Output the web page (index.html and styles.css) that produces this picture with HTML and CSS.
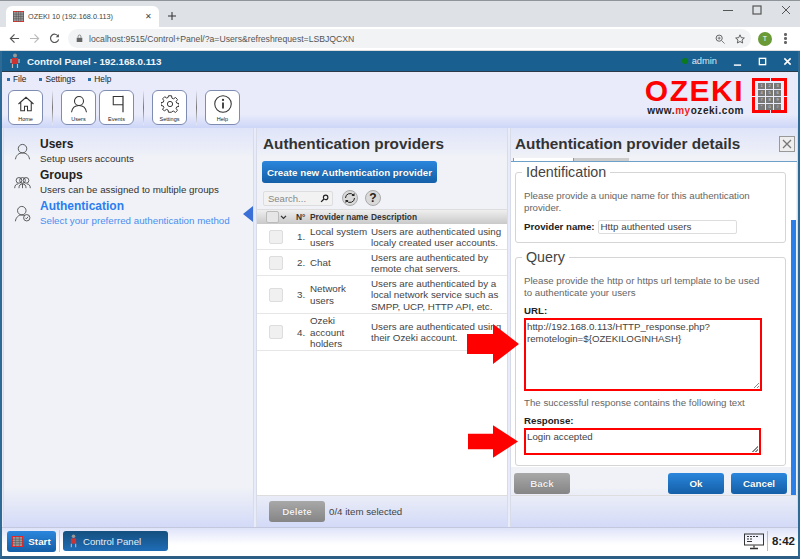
FILE: index.html
```html
<!DOCTYPE html>
<html lang="en">
<head>
<meta charset="utf-8">
<title>OZEKI 10</title>
<link rel="stylesheet" href="styles.css">
</head>
<body>
<div class="browser">
  <div class="tabbar">
    <div class="tab">
      <svg class="fav" viewBox="0 0 12 12"><rect x=".5" y=".5" width="11" height="11" fill="#999" stroke="#e22"/><path d="M0 3.500h12M0 6h12M0 8.500h12M3.500 0v12M6 0v12M8.500 0v12" stroke="#555" stroke-width=".6"/></svg>
      <span class="tabtitle">OZEKI 10 (192.168.0.113)</span>
      <span class="tabx">✕</span>
    </div>
    <svg class="newtab" viewBox="0 0 10 10"><path d="M5 0v10M0 5h10" stroke="#333" stroke-width="1.300"/></svg>
    <div class="winctl">
      <svg viewBox="0 0 10 10"><path d="M0 5.500h10" stroke="#555"/></svg>
      <svg viewBox="0 0 10 10"><rect x="1" y="1" width="8" height="8" fill="none" stroke="#555" stroke-width="1.200"/></svg>
      <svg viewBox="0 0 10 10"><path d="M1 1l8 8M9 1l-8 8" stroke="#555"/></svg>
    </div>
  </div>
  <div class="addr">
    <svg class="nav" viewBox="0 0 12 12"><path d="M11 6H2M6 1.500L1.500 6 6 10.500" fill="none" stroke="#555" stroke-width="1.300"/></svg>
    <svg class="nav" viewBox="0 0 12 12"><path d="M1 6h9M6 1.500L10.500 6 6 10.500" fill="none" stroke="#bbb" stroke-width="1.300"/></svg>
    <svg class="nav" viewBox="0 0 12 12"><path d="M10 3.500A4.500 4.500 0 1 0 10.500 7" fill="none" stroke="#555" stroke-width="1.300"/><path d="M10.800 1v3.500H7.300z" fill="#555"/></svg>
    <div class="omni">
      <svg class="lock" viewBox="0 0 10 12"><rect x="1" y="5" width="8" height="6" fill="#666"/><path d="M3 5V3a2 2 0 0 1 4 0v2" fill="none" stroke="#666"/></svg>
      <span class="url">localhost:9515/Control+Panel/?a=Users&amp;refreshrequest=LSBJQCXN</span>
      <svg class="omniicon" viewBox="0 0 12 12"><circle cx="5" cy="5" r="3.700" fill="none" stroke="#666" stroke-width="1.200"/><path d="M8 8l3.500 3.500M3.200 5h3.600M5 3.200v3.600" stroke="#666"/></svg>
      <svg class="omniicon" viewBox="0 0 12 12"><path d="M6 1l1.500 3.400 3.700.4-2.800 2.400.8 3.600L6 9l-3.200 1.800.8-3.600L.8 4.800l3.700-.4z" fill="none" stroke="#555" stroke-width="1.100"/></svg>
    </div>
    <div class="avatar">T</div>
    <div class="kebab"><i></i><i></i><i></i></div>
  </div>
</div>

<div class="app">
  <div class="titlebar">
    <svg class="applogo" viewBox="0 0 10 16"><circle cx="5" cy="2.500" r="2" fill="#999"/><rect x="2" y="5" width="6" height="6" fill="#c33"/><path d="M2.500 11v4M7.500 11v4M1 6v4M9 6v4" stroke="#bbb" stroke-width="1.200"/></svg>
    <span class="apptitle">Control Panel - 192.168.0.113</span>
    <span class="dot"></span><span class="admin">admin</span>
    <div class="appctl">
      <svg viewBox="0 0 10 10"><path d="M1 9h8" stroke="#fff" stroke-width="1.600"/></svg>
      <svg viewBox="0 0 10 10"><rect x="1.500" y="1.500" width="7" height="7" fill="none" stroke="#fff" stroke-width="1.500"/></svg>
      <svg viewBox="0 0 10 10"><path d="M1.500 1.500l7 7M8.500 1.500l-7 7" stroke="#fff" stroke-width="1.700"/></svg>
    </div>
  </div>
  <div class="top">
    <div class="topleft">
      <div class="menu">
        <span class="mi">File</span><span class="mi">Settings</span><span class="mi">Help</span>
      </div>
      <div class="tools">
        <div class="tool"><svg viewBox="0 0 24 24"><path d="M2 12L12 3l10 9M5 10v11h5v-6h4v6h5V10" fill="none" stroke="#333" stroke-width="1.400"/></svg><span>Home</span></div>
        <div class="sep"></div>
        <div class="tool"><svg viewBox="0 0 24 24"><circle cx="12" cy="8" r="6" fill="none" stroke="#333" stroke-width="1.400"/><path d="M2 23c1-6 5-9 10-9s9 3 10 9" fill="none" stroke="#333" stroke-width="1.400"/></svg><span>Users</span></div>
        <div class="tool"><svg viewBox="0 0 24 24"><path d="M20 1v22" stroke="#333" stroke-width="1.600"/><path d="M20 2H7v11h13" fill="none" stroke="#333" stroke-width="1.400"/></svg><span>Events</span></div>
        <div class="sep"></div>
        <div class="tool"><svg viewBox="0 0 24 24"><circle cx="12" cy="12" r="3.500" fill="none" stroke="#333" stroke-width="1.300"/><path d="M10 1h4l.6 3.200 2 .9 2.800-1.800 2.600 2.800-1.900 2.700.9 2 3 .6v3.800l-3 .6-.9 2 1.800 2.700-2.700 2.700-2.700-1.800-2 .8L14 23h-4l-.6-3-2-.8-2.700 1.800L2 19.300l1.800-2.700-.9-2-2.900-.6v-3.800l3-.6.800-2L2.200 5.100l2.700-2.800 2.700 1.800 1.900-.9z" fill="none" stroke="#333" stroke-width="1.300"/></svg><span>Settings</span></div>
        <div class="sep"></div>
        <div class="tool"><svg viewBox="0 0 24 24"><circle cx="12" cy="12" r="11" fill="none" stroke="#333" stroke-width="1.400"/><path d="M12 10v8" stroke="#333" stroke-width="2.400"/><circle cx="12" cy="6.500" r="1.500" fill="#333"/></svg><span>Help</span></div>
      </div>
    </div>
    <div class="brand">
      <div class="brandtext">
        <div class="ozeki">OZEKI</div>
        <div class="www">www.<b>my</b>ozeki.com</div>
      </div>
      <div class="keypad">
        <span>1</span><span>2</span><span>3</span><span>4</span><span>5</span><span>6</span><span>7</span><span>8</span><span>9</span><span>*</span><span>0</span><span>#</span>
      </div>
    </div>
  </div>

  <div class="main">
    <div class="panel left">
      <div class="navitem">
        <svg viewBox="0 0 24 24"><circle cx="12" cy="8" r="6" fill="none" stroke="#444" stroke-width="1.200"/><path d="M2 23c1-6 5-9 10-9s9 3 10 9" fill="none" stroke="#444" stroke-width="1.200"/></svg>
        <div><h3>Users</h3><p>Setup users accounts</p></div>
      </div>
      <div class="navitem">
        <svg viewBox="0 0 24 24"><g fill="none" stroke="#444" stroke-width="1.200"><circle cx="7" cy="9" r="4"/><circle cx="12" cy="9" r="4"/><circle cx="17" cy="9" r="4"/><path d="M1 20c0-4 2-6 5-6M7 20c0-4 2-6 5-6s5 2 5 6M18 14c3 0 5 2 5 6M12 14v6"/></g></svg>
        <div><h3>Groups</h3><p>Users can be assigned to multiple groups</p></div>
      </div>
      <div class="navitem active">
        <svg viewBox="0 0 24 24"><g fill="none" stroke="#444" stroke-width="1.200"><circle cx="11" cy="8" r="6"/><path d="M2 23c.5-5 4-9 9-9 1.500 0 3 .4 4 1"/><circle cx="18" cy="18" r="4.500"/><path d="M16 18l1.500 1.500 2.500-3"/></g></svg>
        <div><h3>Authentication</h3><p>Select your preferred authentication method</p></div>
        <span class="pointer"></span>
      </div>
    </div>

    <div class="panel mid">
      <h2>Authentication providers</h2>
      <button class="btn blue create">Create new Authentication provider</button>
      <div class="searchrow">
        <div class="search"><span>Search...</span><svg viewBox="0 0 12 12"><circle cx="7.500" cy="4.500" r="3" fill="none" stroke="#222" stroke-width="1.500"/><path d="M5.300 6.700L1.500 10.500" stroke="#222" stroke-width="1.800"/></svg></div>
        <div class="round"><svg viewBox="0 0 12 12"><path d="M1.500 6a4.500 4.500 0 0 1 8-2.800M10.500 6a4.500 4.500 0 0 1-8 2.800" fill="none" stroke="#222"/><path d="M10.500 1v3h-3zM1.500 11V8h3z" fill="#222"/></svg></div>
        <div class="round q">?</div>
      </div>
      <div class="thead">
        <span class="thcheck"></span>
        <svg class="chev" viewBox="0 0 8 6"><path d="M1 1l3 3 3-3" fill="none" stroke="#333" stroke-width="1.500"/></svg>
        <span class="thn">N°</span><span class="thname">Provider name</span><span>Description</span>
      </div>
      <div class="row"><span class="cb"></span><span class="n">1.</span><span class="name">Local system users</span><span class="desc">Users are authenticated using localy created user accounts.</span></div>
      <div class="row"><span class="cb"></span><span class="n">2.</span><span class="name">Chat</span><span class="desc">Users are authenticated by remote chat servers.</span></div>
      <div class="row"><span class="cb"></span><span class="n">3.</span><span class="name">Network users</span><span class="desc">Users are authenticated by a local network service such as SMPP, UCP, HTTP API, etc.</span></div>
      <div class="row"><span class="cb"></span><span class="n">4.</span><span class="name">Ozeki account holders</span><span class="desc">Users are authenticated using their Ozeki account.</span></div>
      <div class="listspace"></div>
      <div class="midfoot"><button class="btn gray del">Delete</button><span>0/4 item selected</span></div>
    </div>

    <div class="panel right">
      <div class="righthead">
        <h2>Authentication provider details</h2>
        <span class="close"><svg viewBox="0 0 14 14"><path d="M3 3l8 8M11 3l-8 8" stroke="#777" stroke-width="1.300"/></svg></span>
      </div>
      <div class="tabs"><span class="t1"></span><span class="t2"></span><span class="t3"></span></div>
      <div class="scrollarea">
        <div class="content">
          <div class="forms">
            <fieldset>
              <legend>Identification</legend>
              <p>Please provide a unique name for this authentication provider.</p>
              <label class="inline">Provider name: <span class="input">Http authented users</span></label>
            </fieldset>
            <fieldset class="query">
              <legend>Query</legend>
              <p>Please provide the http or https url template to be used to authenticate your users</p>
              <label>URL:</label>
              <div class="ta big">http://192.168.0.113/HTTP_response.php?<br>remotelogin=${OZEKILOGINHASH}<i></i></div>
              <p class="succ">The successful response contains the following text</p>
              <label>Response:</label>
              <div class="ta small">Login accepted<i></i></div>
            </fieldset>
          </div>
          <div class="rightfoot">
            <button class="btn gray back">Back</button>
            <span class="grow"></span>
            <button class="btn blue ok">Ok</button>
            <button class="btn blue ok">Cancel</button>
          </div>
        </div>
        <div class="bar"><div class="thumb"></div></div>
      </div>
      <div class="rightstrip"></div>
    </div>
  </div>

  <div class="taskbar">
    <button class="btn blue start">
      <svg viewBox="0 0 12 12"><rect x=".5" y=".5" width="11" height="11" fill="#999" stroke="#e22"/><path d="M0 3.500h12M0 6h12M0 8.500h12M4 0v12M8 0v12" stroke="#555" stroke-width=".6"/></svg>Start
    </button>
    <div class="tsep"></div>
    <div class="cp">
      <svg viewBox="0 0 10 16"><circle cx="5" cy="2.500" r="2" fill="#999"/><rect x="2" y="5" width="6" height="6" fill="#c33"/><path d="M2.500 11v4M7.500 11v4" stroke="#bbb" stroke-width="1.200"/></svg>
      Control Panel
    </div>
    <span class="grow"></span>
    <svg class="monitor" viewBox="0 0 20 16"><rect x=".5" y=".5" width="19" height="11" fill="none" stroke="#333"/><path d="M3 3h2M6 3h2M9 3h2M12 3h2M3 5.500h2M6 5.500h2M3 8h5" stroke="#333" stroke-width="1.200"/><path d="M10 12v2M6 15h8" stroke="#333" stroke-width="1.300"/></svg>
    <div class="clock">8:42</div>
  </div>
</div>

<svg class="arrow a1" viewBox="0 0 52 40"><path d="M0 10h26V0l26 20-26 20V30H0z" fill="#f00"/></svg>
<svg class="arrow a2" viewBox="0 0 52 34"><path d="M0 9h26V0l26 17-26 17V25H0z" fill="#f00"/></svg>
</body>
</html>
```

FILE: styles.css
```css
* { box-sizing: border-box; }
html, body { margin: 0; height: 559px; overflow: hidden; }
body { font-family: "Liberation Sans", Arial, sans-serif; font-size: 11px; color: #333; background: #fff; position: relative; display: flex; flex-direction: column; }
p, h2, h3 { margin: 0; }
button { font-family: inherit; }

.browser { height: 51px; flex: none; }
.tabbar { height: 27px; background: #dee1e6; border-top: 1px solid #8e9499; display: flex; align-items: flex-end; padding-left: 6px; position: relative; }
.tab { width: 153px; height: 21px; background: #fff; border-radius: 6px 6px 0 0; display: flex; align-items: center; padding: 0 7px; }
.fav { width: 11px; height: 11px; margin-right: 4px; flex: none; }
.tabtitle { font-size: 7.300px; color: #444; flex: 1; white-space: nowrap; }
.tabx { font-size: 8px; color: #444; }
.newtab { width: 8px; height: 8px; margin: 0 0 7px 9px; }
.winctl { margin-left: auto; display: flex; gap: 19px; align-self: flex-start; margin-top: 4px; padding-right: 9px; }
.winctl svg { width: 10px; height: 10px; }
.addr { height: 24px; background: #fff; display: flex; align-items: center; padding: 0 0 0 9px; border-bottom: 1px solid #ddd; }
.nav { width: 11px; height: 11px; margin-right: 9px; flex: none; }
.nav:nth-of-type(3) { margin-right: 8px; }
.omni { width: 683px; height: 19px; background: #f1f3f4; border-radius: 10px; display: flex; align-items: center; padding: 0 6px 0 8px; }
.lock { width: 7px; height: 9px; margin-right: 6px; }
.url { font-size: 8.660px; color: #555; flex: 1; white-space: nowrap; }
.omniicon { width: 10px; height: 10px; margin-left: 10px; }
.avatar { width: 14px; height: 14px; border-radius: 50%; background: #6a9a35; color: #fff; font-size: 7px; text-align: center; line-height: 14px; margin-left: 7px; }
.kebab { display: flex; flex-direction: column; gap: 1.500px; margin-left: 12px; }
.kebab i { width: 2.500px; height: 2.500px; background: #666; border-radius: 50%; }

.app { flex: 1; min-height: 0; display: flex; flex-direction: column; background: #e8ebfa; border-left: 2px solid #2d6a96; border-right: 2px solid #2d6a96; border-bottom: 3px solid #2d5f86; }
.titlebar { height: 21px; flex: none; background: #195f90; border-bottom: 1px solid #2a3a48; color: #fff; display: flex; align-items: center; padding-left: 8px; }
.applogo { width: 10px; height: 16px; margin-right: 7px; }
.apptitle { font-weight: bold; font-size: 9.800px; flex: 1; color: #f2f6fa; }
.dot { width: 6px; height: 6px; background: #0a7a1a; border-radius: 50%; margin-right: 4px; }
.admin { font-size: 9.300px; color: #dfe8f0; margin-right: 16px; }
.appctl { display: flex; gap: 16px; padding-right: 6px; }
.appctl svg { width: 9px; height: 9px; }
.top { height: 56px; flex: none; display: flex; justify-content: space-between; background: linear-gradient(#e9ebfa 0, #e9ebfa 75%, #cdd6f8 100%); }
.menu { display: flex; height: 13px; align-items: center; padding-left: 5px; gap: 13px; font-size: 8.300px; color: #222; }
.mi::before { content: ""; display: inline-block; width: 3px; height: 3px; background: #2a6fae; margin-right: 3px; vertical-align: middle; }
.tools { display: flex; padding-left: 6px; align-items: flex-start; margin-top: 5px; }
.tool { width: 35px; height: 35px; border: 1px solid #7d8cb0; border-radius: 6px; background: #fff; display: flex; flex-direction: column; align-items: center; padding-top: 4px; margin-right: 3px; }
.tool svg { width: 18px; height: 18px; flex: none; }
.tool span { font-size: 5.500px; color: #222; margin-top: 3px; }
.sep { width: 1px; height: 35px; background: linear-gradient(#e8ebfa, #777, #e8ebfa); margin: 0 8px 0 6px; }
.brand { display: flex; padding: 6px 11px 0 0; gap: 8px; }
.brandtext { text-align: right; }
.ozeki { font-size: 30px; line-height: 26px; font-weight: bold; color: #f00; letter-spacing: 1.500px; }
.www { font-size: 10px; line-height: 10px; font-weight: bold; color: #222; letter-spacing: .55px; margin-top: 2px; }
.www b { color: #e22; }
.keypad { width: 35px; height: 35px; border: 3px solid #f00; display: grid; grid-template-columns: repeat(3, 1fr); grid-template-rows: repeat(4, 1fr); gap: 1px; padding: 2px 3px; position: relative; }
.keypad::before { content: ""; position: absolute; left: 50%; top: -3px; width: 1px; height: 35px; background: linear-gradient(#e9ebfa 3px, transparent 3px, transparent 32px, #e9ebfa 32px); }
.keypad::after { content: ""; position: absolute; left: -3px; top: 50%; width: 35px; height: 1px; background: linear-gradient(90deg, #e9ebfa 3px, transparent 3px, transparent 32px, #e9ebfa 32px); }
.keypad span { background: #777; color: #ddd; font-size: 4px; text-align: center; line-height: 6px; }

.main { flex: 1; min-height: 0; display: flex; gap: 2px; padding-left: 1px; border-bottom: 1px solid #c3c8de; }
.panel { background: linear-gradient(#dfe4f9 0, #f0f2f7 30px, #f0f2f7 calc(100% - 40px), #d3daf7 100%); border: 1px solid #d8dbe8; border-width: 0 1px; }
.left { width: 251px; flex: none; padding-top: 8px; position: relative; }
.navitem { display: flex; align-items: center; height: 31px; padding-left: 10px; }
.navitem svg { width: 17px; height: 17px; margin-right: 9px; flex: none; }
.navitem h3 { font-size: 12px; line-height: 15px; color: #222; }
.navitem p { font-size: 9.750px; line-height: 14px; color: #333; white-space: nowrap; }
.active h3 { color: #2a7ef0; }
.active p { color: #4a90f0; }
.pointer { position: absolute; right: 0; top: 78px; border: 8px solid transparent; border-right: 10px solid #3a6fd8; border-left: 0; }

.mid { width: 252px; flex: none; display: flex; flex-direction: column; }
.mid h2 { font-size: 15.300px; line-height: 19px; color: #333; padding: 6px 0 0 6px; height: 24px; }
.btn { border: 0; color: #fff; font-weight: bold; border-radius: 3px; font-size: 9.800px; text-shadow: 0 0 1px #0005; }
.blue { background: linear-gradient(#2b86dc, #145fa8); }
.gray { background: linear-gradient(#a8a8a8, #858585); color: #eee; }
.create { width: 175px; height: 22px; margin: 9px 0 0 5px; padding: 0; flex: none; }
.searchrow { display: flex; align-items: center; margin: 7px 0 0 6px; gap: 9px; height: 16px; flex: none; }
.search { width: 70px; height: 15px; background: #f2f2f2; border: 1px solid #ddd; border-radius: 2px; display: flex; align-items: center; justify-content: space-between; padding: 0 3px 0 4px; font-size: 9.500px; color: #888; }
.search svg { width: 9px; height: 9px; }
.round { width: 16px; height: 16px; border-radius: 50%; background: #d9d9d9; border: 1px solid #aaa; display: flex; align-items: center; justify-content: center; }
.round svg { width: 12px; height: 12px; }
.searchrow .round + .round { margin-left: -2px; }
.q { font-weight: bold; font-size: 12px; color: #222; }
.thead { height: 15px; flex: none; margin-top: 3px; background: linear-gradient(#efefef, #c9c9c9); border-top: 1px solid #ddd; display: flex; align-items: center; font-size: 8.400px; font-weight: bold; color: #333; white-space: nowrap; }
.thcheck { width: 13px; height: 12px; background: #e6e6e6; border: 1px solid #bbb; border-radius: 2px; margin-left: 9px; }
.chev { width: 7px; height: 5px; margin-left: 1px; }
.thn { width: 14px; margin-left: 9px; }
.thname { width: 61px; }
.row { display: flex; flex: none; align-items: center; background: #fff; border-bottom: 1px solid #e6e6e6; padding: 1.500px 0 .5px; line-height: 11.500px; font-size: 9.800px; color: #444; }
.cb { width: 14px; height: 14px; background: #f0f0f0; border: 1px solid #ddd; border-radius: 2px; margin-left: 12px; flex: none; }
.n { margin-left: 14px; width: 13px; flex: none; }
.name { width: 61px; flex: none; }
.desc { width: 136px; flex: none; }
.listspace { flex: 1; background: #fff; }
.midfoot { height: 32px; flex: none; border-top: 1px solid #ddd; display: flex; align-items: center; gap: 4px; padding-left: 12px; font-size: 9.700px; color: #444; }
.del { width: 56px; height: 21px; }

.right { flex: 1; min-width: 0; display: flex; flex-direction: column; }
.righthead { height: 30px; flex: none; display: flex; justify-content: space-between; align-items: center; padding: 1px 2px 0 4px; }
.righthead h2 { font-size: 15.300px; color: #333; }
.close { width: 16px; height: 16px; border: 1px solid #999; background: #eee; display: flex; }
.tabs { height: 4px; flex: none; display: flex; padding-left: 2px; border-bottom: 1px solid #6ea0c8; }
.t1 { width: 61px; background: #fff; border: solid #6ea0c8; border-width: 0 1px; }
.t2 { width: 55px; background: #ccc; }
.t3 { flex: 1; }
.scrollarea { flex: 1; min-height: 0; display: flex; position: relative; }
.content { flex: 1; min-width: 0; display: flex; flex-direction: column; }
.forms { flex: 1; min-height: 0; background: #fff; padding: 3px 5px 0 4px; }
.bar { width: 5px; flex: none; margin-right: 1px; display: flex; flex-direction: column; justify-content: flex-end; background: #fff; }
.thumb { height: 275px; background: #2a80e8; }
fieldset { border: 1px solid #d5d5d5; border-radius: 3px; margin: 0 0 7px; padding: 10px 8px 0 8px; height: 78px; min-width: 0; }
legend { font-size: 14.300px; line-height: 15px; color: #444; padding: 0 4px; margin-left: -2px; }
fieldset p { font-size: 9.700px; line-height: 12px; color: #666; max-width: 240px; }
label { display: block; font-size: 9.700px; font-weight: bold; color: #222; margin-top: 6px; line-height: 12px; }
.inline { display: flex; align-items: center; gap: 3px; margin-top: 6px; }
.input { width: 139px; height: 14px; border: 1px solid #ddd; border-radius: 2px; font-weight: normal; color: #444; padding: 0 2px; font-size: 9.800px; line-height: 12px; }
.query { height: 216px; }
.query p.succ { margin-top: 6px; max-width: none; }
.ta { border: 2px solid #f00; background: #fff; font-size: 9.700px; line-height: 11.500px; color: #444; padding: 1px 1px; position: relative; }
.ta i { position: absolute; right: 1px; bottom: 1px; width: 6px; height: 6px; background: linear-gradient(135deg, transparent 50%, #888 50%, #888 60%, transparent 60%, transparent 75%, #888 75%, #888 85%, transparent 85%); }
.big { width: 238px; height: 73px; margin-top: 1px; }
.small { width: 237px; height: 27px; margin-top: 1px; }
.rightfoot { height: 28px; flex: none; display: flex; padding: 6px 4px 0 3px; gap: 7px; }
.rightfoot .btn { height: 21px; width: 56px; }
.rightstrip { height: 32px; flex: none; border-top: 1px solid #ddd; }
.grow { flex: 1; }

.taskbar { height: 28px; flex: none; display: flex; align-items: center; background: linear-gradient(#dfe3f9, #fff 60%); padding: 0 0 2px 5px; }
.start { width: 49px; height: 21px; display: flex; align-items: center; justify-content: center; gap: 5px; font-size: 9.800px; padding: 0; }
.start svg { width: 11px; height: 11px; }
.tsep { width: 1px; height: 22px; background: #ccd; margin: 0 3px 0 3px; }
.cp { width: 105px; height: 20px; border-radius: 3px; background: linear-gradient(#154f7e, #1f6cb6); color: #e6eef6; font-size: 9.600px; display: flex; align-items: center; gap: 5px; padding-left: 6px; }
.cp svg { width: 9px; height: 14px; }
.monitor { width: 20px; height: 17px; margin-right: 3px; }
.clock { border-left: 1px solid #bbb; padding-left: 4px; padding-right: 3px; font-weight: bold; font-size: 11.500px; line-height: 20px; color: #222; }

.arrow { position: absolute; }
.a1 { left: 467px; top: 324px; width: 52px; height: 40px; }
.a2 { left: 468px; top: 425px; width: 50px; height: 33px; }
```
